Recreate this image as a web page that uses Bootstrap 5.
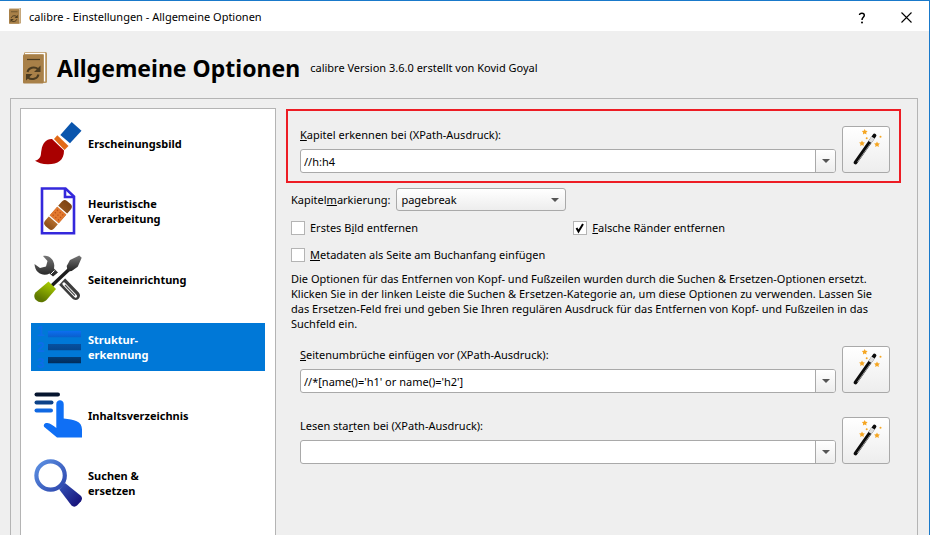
<!DOCTYPE html>
<html lang="de">
<head>
<meta charset="utf-8">
<meta name="viewport" content="width=device-width, initial-scale=1">
<title>calibre - Einstellungen - Allgemeine Optionen</title>
<link href="https://cdn.jsdelivr.net/npm/bootstrap@5.3.0/dist/css/bootstrap.min.css" rel="stylesheet">
<style>
:root { --line: #b4b4b4; --face: #efefef; --accent: #0078d7; }
body { font: 11px/15px "Noto Sans", "Open Sans", sans-serif; color: #000; background: var(--face); }
.app-window { border-top: 1px solid #1979ca; border-right: 1px solid #1979ca; }
.title-bar { height: 30px; padding-left: 9px; }
.title-bar button { width: 45px; height: 30px; border: 0; background: none; padding: 0; }
.page-head { height: 67px; padding: 6px 23px 0; gap: 10px; }
.page-head h1 { font-size: 23px; line-height: 32px; font-weight: 700; }
.pane { margin: 0 11px 0 10px; padding: 9px 16px 0 9px; border: 1px solid var(--line); border-bottom: 0; gap: 10px; }
.side { flex: 0 0 256px; padding: 10px; gap: 20px; border: 1px solid var(--line); border-bottom: 0; }
.side a { height: 48px; padding-left: 3px; gap: 6px; font-weight: 700; color: #000; text-decoration: none; }
.side a.active { background: var(--accent); color: #fff; }
.side text { font-family: "Liberation Sans", sans-serif; font-size: 14px; font-weight: 700; }
.settings { min-width: 0; padding-top: 1px; }
.xpath { padding: 0 11px 0 14px; gap: 6px; }
.marked { border: 2px solid #ed1c24; padding: 15px 9px 8px 12px; }
.xpath label { display: block; line-height: 18px; margin-bottom: 5px; }
.combo { height: 24px; border: 1px solid #a9a9a9; border-radius: 3px; background: #fff; overflow: hidden; }
.combo input { min-width: 0; border: 0; outline: 0; background: none; padding: 0 3px; color: #000; }
.combo button { width: 20px; border: 0; border-left: 1px solid #a9a9a9; padding: 0; background: linear-gradient(#fff, #ededed); }
.wand { flex: 0 0 48px; height: 47px; padding: 0; border: 1px solid #a9a9a9; border-radius: 3px; background: linear-gradient(#fff, #ededed); }
.body-block { padding-left: 5px; padding-right: 5px; }
.mode-row { gap: 6px; margin-top: 5px; }
.mode-row select { width: 170px; height: 23px; padding: 0 4px; color: #000; border: 1px solid #a9a9a9; border-radius: 3px; appearance: none;
  background: url("data:image/svg+xml,%3Csvg xmlns='http://www.w3.org/2000/svg' width='8' height='4'%3E%3Cpath d='M0 0h8L4 4z' fill='%23555'/%3E%3C/svg%3E") no-repeat right 6px center, linear-gradient(#fff, #ededed); }
.checks { display: grid; grid-template-columns: 7fr 8fr; row-gap: 12px; margin-top: 9px; }
.checks label { gap: 5px; }
.checks input { appearance: none; width: 14px; height: 14px; margin: 0; border: 1px solid #b4b4b4; background: #fff no-repeat center; }
.checks input:checked { background-image: url("data:image/svg+xml,%3Csvg xmlns='http://www.w3.org/2000/svg' width='12' height='12'%3E%3Cpath d='M2.5 6l2 3.5L9 2' fill='none' stroke='%23000' stroke-width='2'/%3E%3C/svg%3E"); }
.hint { margin: 9px 0 15px; padding-right: 10px; }
.gap-block { margin-top: 24px; }
</style>
<script src="https://cdn.jsdelivr.net/npm/bootstrap@5.3.0/dist/js/bootstrap.bundle.min.js"></script>
</head>
<body class="vh-100 overflow-hidden">
<svg class="d-none" aria-hidden="true">
  <symbol id="book" viewBox="0 0 24 32">
    <rect x="1" y="0" width="23" height="31" rx="1.5" fill="#b9955f"/>
    <path d="M2 1.500h19.500v28" fill="none" stroke="#fff" stroke-width="1.400"/>
    <rect x="0" y="2.500" width="20.500" height="29" rx="1" fill="#a88048"/>
    <path d="M4 7.500h13" stroke="#4b3b20" stroke-width="1.200"/>
    <path d="M4.500 20c1-4.500 7-6 10.500-3M15.500 22.500c-1 4.500-7 6-10.500 3" fill="none" stroke="#4b3b20" stroke-width="2"/>
    <path d="M17.500 13.500v6.500h-6.500zM3 28.500V22h6.500z" fill="#4b3b20"/>
  </symbol>
  <symbol id="wand" viewBox="0 0 46 46">
    <path d="M12.500 35.500L31.500 8.500" stroke="#0b0b0b" stroke-width="3.800" stroke-linecap="round"/>
    <path d="M14.500 35L27.500 16.500" stroke="#999" stroke-width="1"/>
    <path d="M27 15l3-4.500" stroke="#ddd" stroke-width="3.800"/>
    <g fill="#f5a623">
      <path id="st" d="M21.700 2l.9 1.800 2 .2-1.400 1.400.3 2-1.800-.9-1.800.9.300-2L18.800 4l2-.2z"/>
      <use href="#st" x="-2.700" y="11.500"/><use href="#st" x="12.300" y="12.500"/>
      <circle cx="23.700" cy="11.300" r="1"/><circle cx="37.500" cy="9.700" r="1"/>
    </g>
  </symbol>
  <symbol id="arrow" viewBox="0 0 8 4"><path d="M0 0h8L4 4z" fill="#555"/></symbol>
</svg>

<div class="app-window d-flex flex-column h-100">
  <header class="title-bar d-flex align-items-center bg-white flex-shrink-0">
    <svg class="me-2" width="12" height="16" aria-hidden="true"><use href="#book"/></svg>
    <span class="flex-grow-1">calibre - Einstellungen - Allgemeine Optionen</span>
    <button type="button" aria-label="Hilfe"><svg width="8" height="12" viewBox="0 0 8 12"><path d="M1.500 3C1.500.5 6.300.5 6.300 3.300 6.300 5.300 4 5.300 4 8" fill="none" stroke="#000" stroke-width="1.500"/><circle cx="4" cy="10.500" r="1"/></svg></button>
    <button type="button" aria-label="Schließen"><svg width="11" height="11" viewBox="0 0 11 11"><path d="M.5.5l10 10m0-10l-10 10" stroke="#000" stroke-width="1.100"/></svg></button>
  </header>

  <div class="page-head d-flex align-items-center flex-shrink-0">
    <svg width="24" height="32" aria-hidden="true"><use href="#book"/></svg>
    <h1 class="m-0">Allgemeine Optionen</h1>
    <span>calibre Version 3.6.0 erstellt von Kovid Goyal</span>
  </div>

  <main class="pane d-flex flex-grow-1">
    <nav class="side d-flex flex-column bg-white">
      <a href="#" class="d-flex align-items-center">
        <svg width="48" height="48" viewBox="0 0 48 48"><path d="M37.700 3L47.500 11.700 36 24.300 26.300 16z" fill="#0a55ad"/><path d="M23.300 16.300L34.500 27l-4 4L20 20z" fill="#e26a17"/><path d="M1 41.700C8 40 6.500 35 7.500 31c1-7 5-11.300 10.500-11l12 11.500c0 10-6 13.500-16 13.800C8 45.300 4 43.500 1 41.700z" fill="#a90000"/></svg>
        <span>Erscheinungsbild</span></a>
      <a href="#" class="d-flex align-items-center">
        <svg width="48" height="48" viewBox="0 0 48 48"><defs><linearGradient id="ban"><stop stop-color="#8a4d18"/><stop offset=".25" stop-color="#b06a2a"/><stop offset="1" stop-color="#7d4312"/></linearGradient></defs><path d="M8 1.500h23.500l8.500 8V46.300H8z" fill="#fff" stroke="#3428dc" stroke-width="2.600"/><path d="M31 1.500V10h9" fill="none" stroke="#3428dc" stroke-width="2.600"/><g transform="rotate(-49 24 28)"><rect x="7.500" y="22" width="33" height="12" rx="4" fill="url(#ban)"/><rect x="18" y="22" width="12" height="12" fill="#e2792f"/><path d="M17.500 21v14M30.500 21v14" stroke="#fff" stroke-width="1.200"/><path d="M20 24.500h8M20 28h8M20 31.500h8" stroke="#b9511a" stroke-width="1.200" stroke-dasharray="1.300 2"/></g></svg>
        <span>Heuristische<br>Verarbeitung</span></a>
      <a href="#" class="d-flex align-items-center">
        <svg width="48" height="48" viewBox="0 0 48 48"><defs><linearGradient id="met" x2="0" y2="1"><stop stop-color="#777"/><stop offset="1" stop-color="#222"/></linearGradient><linearGradient id="grn" gradientUnits="userSpaceOnUse" x1="15" y1="28" x2="7" y2="44"><stop stop-color="#a5c800"/><stop offset="1" stop-color="#5f7800"/></linearGradient></defs><path d="M9 1c6-1.500 11 3.500 11.300 9.500l-.3 3 4 4-5 4-3.500-3C10 21.500 1 19 .5 9l5.500 4 6-1.500L13.500 6z" fill="url(#met)"/><path d="M17 19l3.500-3.500M20 22l4-4" stroke="#fff" stroke-width="1"/><path d="M28 26.500L41.500 40.500" stroke="#3d3d3d" stroke-width="9" stroke-linecap="round"/><path d="M21 25.500L27.500 19l4 4-6.500 7z" fill="#fff"/><path d="M30 29L41.500 41" stroke="#fff" stroke-width="3.200" stroke-linecap="round"/><path d="M31 30L41 40.500" stroke="#555" stroke-width="1.200"/><path d="M18 30.500L36 13.500" stroke="#fff" stroke-width="6"/><path d="M18 30.500L36 13.500" stroke="#1c1c1c" stroke-width="3.400"/><path d="M32.700 11L36 5 45.300.5l2.400 2.300-4 9-6 4.200-4 .5z" fill="url(#met)"/><path d="M14.500 26.500L22 34l-9.500 11C6 51-3 44 1.500 37.500z" fill="url(#grn)"/></svg>
        <span>Seiteneinrichtung</span></a>
      <a href="#" class="active d-flex align-items-center" aria-current="page">
        <svg width="48" height="48" viewBox="0 0 48 48"><defs><linearGradient id="b1" x2="0" y2="1"><stop stop-color="#0c6ef0"/><stop offset="1" stop-color="#0a5fcb"/></linearGradient><linearGradient id="b2" x2="0" y2="1"><stop stop-color="#07509f"/><stop offset="1" stop-color="#05478f"/></linearGradient><linearGradient id="b3" x2="0" y2="1"><stop stop-color="#023d78"/><stop offset="1" stop-color="#012c5a"/></linearGradient></defs><g fill="#0d6ee9" text-anchor="middle"><text x="7" y="13">1</text><text x="7" y="29">2</text><text x="7" y="45">3</text></g><path d="M14 8h33v6.300H14z" fill="url(#b1)"/><path d="M14 21h33v6.300H14z" fill="url(#b2)"/><path d="M14 34h33v6.300H14z" fill="url(#b3)"/></svg>
        <span>Struktur-<br>erkennung</span></a>
      <a href="#" class="d-flex align-items-center">
        <svg width="48" height="48" viewBox="0 0 48 48"><g stroke-width="4" stroke-linecap="round"><path d="M2.500 3.400H24" stroke="#06152f"/><path d="M2.500 11.400H17.500" stroke="#0c4289"/><path d="M2.500 19.400H17" stroke="#1068e2"/></g><path d="M22.300 37V13c0-5 7.400-5 7.400 0v14.500C40 28.500 48 30 48 38.500v8H23L10.300 36c-1.500-2 .5-4.300 3-4 3 .2 6 2.500 9 5z" fill="#0f6ff5"/></svg>
        <span>Inhaltsverzeichnis</span></a>
      <a href="#" class="d-flex align-items-center">
        <svg width="48" height="48" viewBox="0 0 48 48"><defs><linearGradient id="mag" gradientUnits="userSpaceOnUse" x1="4" y1="4" x2="45" y2="45"><stop stop-color="#5a8de0"/><stop offset=".55" stop-color="#3350b4"/><stop offset="1" stop-color="#17127a"/></linearGradient></defs><circle cx="16.600" cy="16.500" r="14.200" fill="none" stroke="url(#mag)" stroke-width="4.200"/><path d="M25.300 30.500L31 24l15.500 12.500c2 2 1.800 4 .5 5.700L43 46.500c-1.500 1.500-4 1.500-5.500 0z" fill="url(#mag)"/></svg>
        <span>Suchen &amp;<br>ersetzen</span></a>
    </nav>

    <form class="settings flex-grow-1">
      <div class="xpath marked d-flex align-items-end">
        <div class="flex-grow-1">
          <label for="chapter"><u>K</u>apitel erkennen bei (XPath-Ausdruck):</label>
          <div class="combo d-flex"><input id="chapter" class="flex-grow-1" type="text" value="//h:h4"><button type="button" aria-label="Verlauf"><svg class="d-block mx-auto" width="8" height="4"><use href="#arrow"/></svg></button></div>
        </div>
        <button class="wand" type="button" aria-label="XPath-Assistent"><svg class="d-block" width="46" height="46"><use href="#wand"/></svg></button>
      </div>

      <div class="body-block">
        <div class="mode-row d-flex align-items-center">
          <label for="mode">Kapitel<u>m</u>arkierung:</label>
          <select id="mode"><option>pagebreak</option></select>
        </div>
        <div class="checks">
          <label class="d-flex align-items-center"><input type="checkbox"><span>Erstes B<u>i</u>ld entfernen</span></label>
          <label class="d-flex align-items-center"><input type="checkbox" checked><span><u>F</u>alsche Ränder entfernen</span></label>
          <label class="d-flex align-items-center"><input type="checkbox"><span><u>M</u>etadaten als Seite am Buchanfang einfügen</span></label>
        </div>
        <p class="hint">Die Optionen für das Entfernen von Kopf- und Fußzeilen wurden durch die Suchen &amp; Ersetzen-Optionen ersetzt. Klicken Sie in der linken Leiste die Suchen &amp; Ersetzen-Kategorie an, um diese Optionen zu verwenden. Lassen Sie das Ersetzen-Feld frei und geben Sie Ihren regulären Ausdruck für das Entfernen von Kopf- und Fußzeilen in das Suchfeld ein.</p>
      </div>

      <div class="xpath d-flex align-items-end">
        <div class="flex-grow-1">
          <label for="breaks"><u>S</u>eitenumbrüche einfügen vor (XPath-Ausdruck):</label>
          <div class="combo d-flex"><input id="breaks" class="flex-grow-1" type="text" value="//*[name()='h1' or name()='h2']"><button type="button" aria-label="Verlauf"><svg class="d-block mx-auto" width="8" height="4"><use href="#arrow"/></svg></button></div>
        </div>
        <button class="wand" type="button" aria-label="XPath-Assistent"><svg class="d-block" width="46" height="46"><use href="#wand"/></svg></button>
      </div>
      <div class="xpath gap-block d-flex align-items-end">
        <div class="flex-grow-1">
          <label for="start">Lesen sta<u>r</u>ten bei (XPath-Ausdruck):</label>
          <div class="combo d-flex"><input id="start" class="flex-grow-1" type="text"><button type="button" aria-label="Verlauf"><svg class="d-block mx-auto" width="8" height="4"><use href="#arrow"/></svg></button></div>
        </div>
        <button class="wand" type="button" aria-label="XPath-Assistent"><svg class="d-block" width="46" height="46"><use href="#wand"/></svg></button>
      </div>
    </form>
  </main>
</div>
</body>
</html>
